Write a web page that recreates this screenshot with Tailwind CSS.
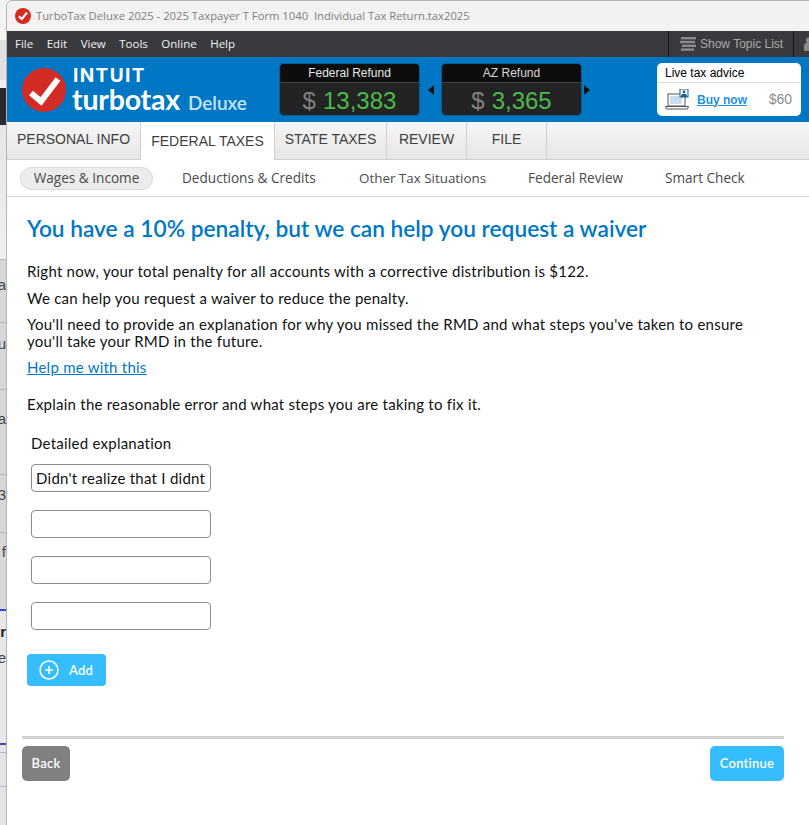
<!DOCTYPE html>
<html lang="en">
<head>
<meta charset="utf-8">
<title>TurboTax Deluxe 2025</title>
<script src="https://cdn.jsdelivr.net/npm/@tailwindcss/browser@4"></script>
</head>
<body class="bg-white overflow-hidden">
<div class="flex w-[809px] h-[825px] overflow-hidden font-['Lato',sans-serif]">

  <!-- window behind, only a sliver shows -->
  <div class="w-[6px] h-full shrink-0 flex flex-col overflow-hidden font-['Liberation_Sans',sans-serif] text-[15px] text-[#444] leading-none">
    <div class="h-[40px] bg-[#f4f4f4]"></div>
    <div class="h-[40px] bg-[#e0e0e2]"></div>
    <div class="h-[8px] bg-[#f0f0f0]"></div>
    <div class="h-[37px] bg-[#2a2a2d]"></div>
    <div class="h-[134px] bg-gradient-to-b from-[#e6e6e6] to-[#f0f0f0]"></div>
    <div class="h-[63px] bg-[#d8d8da] border-t border-[#b8b8ba] flex justify-end pt-[17px]">a</div>
    <div class="h-[67px] bg-[#d8d8da] border-t border-[#b8b8ba] flex justify-end pt-[13px]">u</div>
    <div class="h-[85px] bg-[#d8d8da] border-t border-[#b8b8ba] flex justify-end pt-[21px]">a</div>
    <div class="h-[58px] bg-[#d8d8da] border-t border-[#b8b8ba] flex justify-end pt-[12px]">3</div>
    <div class="h-[77px] bg-[#d8d8da] border-t border-[#b8b8ba] flex justify-end pt-[11px]">f</div>
    <div class="h-[134px] bg-[#e8e8ea] border-t-2 border-[#3050b8] flex flex-col items-end pt-[13px] gap-[11px]"><span class="font-bold text-[#222]">r</span><span>e</span></div>
    <div class="h-[9px] bg-[#e4e4e6] border-t-2 border-[#3050b8]"></div>
    <div class="h-[34px] bg-[#e4e4e6] border-t border-[#b4b8cc]"></div>
    <div class="flex-1 bg-[#e4e4e6] border-t border-[#b4b8cc]"></div>
  </div>

  <!-- app window -->
  <div class="w-[803px] h-full shrink-0 border-l border-[#b4b4b8] border-t rounded-tl-[6px] overflow-hidden flex flex-col">

    <!-- title bar -->
    <div class="h-[30px] shrink-0 bg-[#f2f2f2] flex items-center pl-[8px] gap-[5px] font-['Open_Sans',sans-serif] text-[11.25px] text-[#808080] whitespace-pre">
      <svg width="16" height="16" viewBox="0 0 16 16"><circle cx="8" cy="8" r="8" fill="#d52b1e"/><path d="M3.8 8.4 6.8 11 12 4.6" fill="none" stroke="#fff" stroke-width="2.2"/></svg>
      <span>TurboTax Deluxe 2025 - 2025 Taxpayer T Form 1040  Individual Tax Return.tax2025</span>
    </div>

    <!-- menu bar -->
    <div class="h-[26px] shrink-0 bg-[#393a3e] flex items-center font-['Open_Sans',sans-serif] text-[11.5px] text-[#f2f2f2]">
      <div class="flex pl-[8px] gap-[13.5px]">
        <span>File</span><span>Edit</span><span>View</span><span>Tools</span><span>Online</span><span>Help</span>
      </div>
      <div class="ml-auto h-full flex font-['Liberation_Sans',sans-serif] text-[12px] text-[#a9a9a9]">
        <div class="w-[126px] h-full border-x border-[#16161a] flex items-center pl-[11px] gap-[4px]">
          <svg width="16" height="14" viewBox="0 0 16 14" fill="#8a8a8a"><rect x="1" y="0" width="15" height="2.4"/><rect x="0" y="3.8" width="15" height="2.4"/><rect x="2" y="7.6" width="14" height="2.4"/><rect x="1" y="11.4" width="13" height="2.4"/></svg>
          <span>Show Topic List</span>
        </div>
        <div class="w-[15px] h-full flex items-center pl-[10px] overflow-hidden">
          <svg class="shrink-0" width="12" height="14" viewBox="0 0 12 14" fill="#8a8a8a"><circle cx="5" cy="3.5" r="3"/><path d="M0 14V9a3 3 0 0 1 3-3h4a3 3 0 0 1 3 3v5z"/></svg>
        </div>
      </div>
    </div>

    <!-- brand bar -->
    <div class="h-[65px] shrink-0 bg-[#0077c5] flex relative">
      <div class="w-[272px] flex items-center pl-[15px] shrink-0">
        <svg class="shrink-0" width="44" height="44" viewBox="0 0 44 44"><circle cx="22" cy="22" r="22" fill="#d52b27"/><path d="M9 25 19 33.5 36 11" fill="none" stroke="#fff" stroke-width="6"/></svg>
        <div class="pl-[6px] pt-[1px] text-white whitespace-nowrap">
          <div class="font-['Inter',sans-serif] font-bold text-[19px] leading-[21px] tracking-[1.4px] pl-[1px]">INTUIT</div>
          <div class="flex items-baseline font-['Lato',sans-serif] leading-[27px]">
            <span class="font-bold text-[28.5px] tracking-[-0.2px]">turbotax</span>
            <span class="text-[#c8e2f5] text-[19px] ml-[8px] font-semibold">Deluxe</span>
          </div>
        </div>
      </div>

      <div class="flex items-center h-full font-['Liberation_Sans',sans-serif]">
        <div class="w-[141px] h-[53px] rounded-[5px] border border-[#0a5c94] bg-[#232323] overflow-hidden flex flex-col">
          <div class="h-[19px] bg-[#0d0d0d] border-b border-[#444] text-[12px] text-[#e8e8e8] flex items-center justify-center">Federal Refund</div>
          <div class="flex-1 flex items-center justify-center text-[24px] gap-[7px]"><span class="text-[#808080]">$</span><span class="text-[#4cbb4c]">13,383</span></div>
        </div>
        <div class="w-[21px] flex justify-center">
          <svg width="6" height="10" viewBox="0 0 6 10"><path d="M6 0V10L0 5z" fill="#111"/></svg>
        </div>
        <div class="w-[141px] h-[53px] rounded-[5px] border border-[#0a5c94] bg-[#232323] overflow-hidden flex flex-col">
          <div class="h-[19px] bg-[#0d0d0d] border-b border-[#444] text-[12px] text-[#d8d8d8] flex items-center justify-center">AZ Refund</div>
          <div class="flex-1 flex items-center justify-center text-[24px] gap-[7px]"><span class="text-[#808080]">$</span><span class="text-[#4cbb4c]">3,365</span></div>
        </div>
        <svg class="ml-[2px]" width="6" height="10" viewBox="0 0 6 10"><path d="M0 0V10L6 5z" fill="#111"/></svg>
      </div>

      <div class="ml-auto mr-[8px] mt-[6px] w-[144px] h-[53px] bg-white rounded-[5px] font-['Liberation_Sans',sans-serif] flex flex-col">
        <div class="h-[20px] border-b border-[#dcdcdc] pl-[8px] text-[12px] text-black flex items-center">Live tax advice</div>
        <div class="flex-1 flex items-center pl-[8px]">
          <svg width="24" height="21" viewBox="0 0 24 21">
            <rect x="3" y="5" width="17" height="12" fill="#fff" stroke="#555" stroke-width="1"/>
            <rect x="5" y="7" width="12" height="8" fill="#c9dfee"/>
            <path d="M0.5 17.5H23.5L22.5 20H1.5z" fill="#fff" stroke="#555"/>
            <rect x="15" y="0" width="8" height="8" fill="#fff" stroke="#1b5e8c"/>
            <circle cx="19" cy="3" r="1.4" fill="#1b5e8c"/><path d="M15.5 8l1.5-3h4l1.5 3z" fill="#1b5e8c"/>
          </svg>
          <a class="ml-[8px] text-[12px] font-bold text-[#1f8fdd] underline">Buy now</a>
          <span class="ml-auto mr-[9px] text-[14px] text-[#8a8a8a]">$60</span>
        </div>
      </div>
    </div>

    <!-- main tabs -->
    <div class="h-[38px] shrink-0 flex bg-gradient-to-b from-[#f6f6f6] to-[#e6e6e6] border-b border-[#d0d0d0] font-['Liberation_Sans',sans-serif] text-[14px] text-[#3f3f3f]">
      <div class="w-[134px] flex items-center justify-center pb-[2px] border-r border-[#d0d0d0]">PERSONAL INFO</div>
      <div class="w-[134px] h-[38px] bg-white flex items-center justify-center border-r border-[#d0d0d0]">FEDERAL TAXES</div>
      <div class="w-[112px] flex items-center justify-center pb-[2px] border-r border-[#d0d0d0]">STATE TAXES</div>
      <div class="w-[80px] flex items-center justify-center pb-[2px] border-r border-[#d0d0d0]">REVIEW</div>
      <div class="w-[80px] flex items-center justify-center pb-[2px] border-r border-[#d0d0d0]">FILE</div>
    </div>

    <!-- sub nav -->
    <div class="h-[37px] shrink-0 border-b border-[#d4d4d4] flex items-center pl-[13px] text-[13.6px] text-[#4a4a4a] font-['Open_Sans',sans-serif] whitespace-nowrap">
      <div class="w-[133px] h-[23px] rounded-full bg-[#ececec] border border-[#d8d8d8] flex items-center justify-center">Wages &amp; Income</div>
      <span class="w-[177px] ml-[29px]">Deductions &amp; Credits</span>
      <span class="w-[169px] text-[13.4px]">Other Tax Situations</span>
      <span class="w-[137px]">Federal Review</span>
      <span>Smart Check</span>
    </div>

    <!-- page body -->
    <div class="flex-1 relative pl-[20px] text-[15px] tracking-[0.24px] text-[#111] flex flex-col">
      <h1 class="mt-[17px] h-[30px] text-[22.7px] leading-[30px] tracking-normal font-semibold text-[#0077c5] whitespace-nowrap">You have a 10% penalty, but we can help you request a waiver</h1>
      <p class="mt-[17px] leading-[20px]">Right now, your total penalty for all accounts with a corrective distribution is $122.</p>
      <p class="mt-[7px] leading-[20px]">We can help you request a waiver to reduce the penalty.</p>
      <p class="mt-[8px] w-[730px] leading-[17px]">You'll need to provide an explanation for why you missed the RMD and what steps you've taken to ensure you'll take your RMD in the future.</p>
      <a class="mt-[7px] h-[20px] leading-[20px] text-[#0077c5] underline">Help me with this</a>
      <p class="mt-[17px] leading-[20px]">Explain the reasonable error and what steps you are taking to fix it.</p>

      <label class="mt-[19px] ml-[4px] leading-[20px]">Detailed explanation</label>
      <div class="ml-[4px] mt-[11px] flex flex-col gap-[18px]">
        <input class="w-[180px] h-[28px] border border-[#8c8c8c] rounded-[4px] px-[4px] pb-[1px] text-[15px] tracking-[0.26px] text-[#111] bg-white" type="text" value="Didn't realize that I didnt">
        <input class="w-[180px] h-[28px] border border-[#8c8c8c] rounded-[4px] bg-white" type="text">
        <input class="w-[180px] h-[28px] border border-[#8c8c8c] rounded-[4px] bg-white" type="text">
        <input class="w-[180px] h-[28px] border border-[#8c8c8c] rounded-[4px] bg-white" type="text">
      </div>

      <button class="mt-[24px] w-[79px] h-[32px] rounded-[4px] bg-[#35bdff] text-white font-semibold text-[13px] flex items-center pl-[12px] gap-[10px]">
        <svg width="20" height="20" viewBox="0 0 20 20" fill="none" stroke="#fff"><circle cx="10" cy="10" r="9" stroke-width="1.6"/><path d="M10 6v8M6 10h8" stroke-width="1.6"/></svg>
        <span class="pt-[1px]">Add</span>
      </button>

      <div class="mt-[50px] -ml-[5px] w-[762px] h-[3px] bg-[#d0d0d0] shrink-0"></div>
      <div class="mt-[7px] -ml-[5px] w-[762px] flex justify-between font-semibold text-[13px] text-white">
        <button class="w-[48px] h-[35px] rounded-[5px] bg-[#808080]">Back</button>
        <button class="w-[74px] h-[35px] rounded-[5px] bg-[#35bdff]">Continue</button>
      </div>
    </div>
  </div>
</div>
</body>
</html>
